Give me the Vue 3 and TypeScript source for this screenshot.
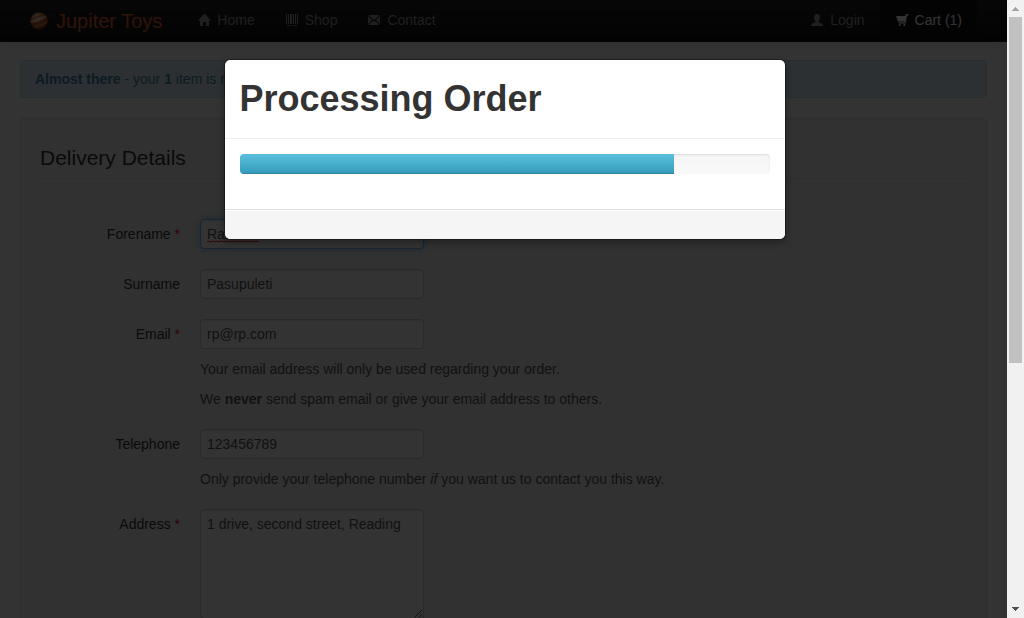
<script setup lang="ts">
import { ref } from 'vue'

const progress = ref(82)
const itemCount = ref(1)

const order = ref({
  forename: 'Ramesh',
  surname: 'Pasupuleti',
  email: 'rp@rp.com',
  telephone: '123456789',
  address: '1 drive, second street, Reading',
})
</script>

<template>
  <div class="window">
    <div class="viewport">
      <nav class="navbar">
        <a class="brand" href="#/home">
          <svg class="logo" width="34" height="24" viewBox="0 0 34 24" aria-hidden="true">
            <defs>
              <radialGradient id="planet" cx="0.4" cy="0.3" r="0.75">
                <stop offset="0" stop-color="#ffe6c4" />
                <stop offset="0.5" stop-color="#d8783c" />
                <stop offset="1" stop-color="#7a2508" />
              </radialGradient>
              <clipPath id="disc"><circle cx="18" cy="12" r="8.5" /></clipPath>
            </defs>
            <path d="M1 20 Q16 12 33 5" fill="none" stroke="#3a3a3a" stroke-width="1" />
            <circle cx="18" cy="12" r="8.5" fill="url(#planet)" />
            <g clip-path="url(#disc)" fill="none">
              <path d="M8 10 Q18 9 26 2" stroke="#c4683a" stroke-width="1.2" />
              <path d="M8 13 Q19 12 28 5" stroke="#ffe8cc" stroke-width="1.4" />
              <path d="M8 16 Q19 15 28 8" stroke="#b04a1c" stroke-width="1.6" />
              <path d="M9 19 Q20 18 28 12" stroke="#dc8450" stroke-width="1.2" />
              <path d="M12 21 Q22 20 28 15" stroke="#983a14" stroke-width="1.4" />
            </g>
          </svg>
          <span>Jupiter Toys</span>
        </a>
        <ul class="nav">
          <li>
            <a href="#/home">
              <svg width="14" height="14" viewBox="0 0 14 14" aria-hidden="true">
                <path d="M7.5 0.5 L14 7.5 H12 V13 H9 V9 H6 V13 H3 V7.5 H1 Z" />
              </svg>
              Home
            </a>
          </li>
          <li>
            <a href="#/shop">
              <svg width="14" height="14" viewBox="0 0 14 14" aria-hidden="true">
                <path d="M1 1h1v10H1zM3 1h1v10H3zM5 1h2v10H5zM8 1h1v10H8zM10 1h1v10h-1zM12 1h1v10h-1zM2 12h3v1H2zM6 12h1v1H6zM8 12h1v1H8zM10 12h2v1h-2z" />
              </svg>
              Shop
            </a>
          </li>
          <li>
            <a href="#/contact">
              <svg width="14" height="14" viewBox="0 0 14 14" aria-hidden="true">
                <path d="M1.500 2H12.500L7 7.200ZM1 3L5 7L1 11ZM13 3L9 7L13 11ZM5.700 7.700L7 9L8.300 7.700L12.500 12H1.500Z" />
              </svg>
              Contact
            </a>
          </li>
        </ul>
        <ul class="nav nav-right">
          <li>
            <a href="#/login">
              <svg width="14" height="14" viewBox="0 0 14 14" aria-hidden="true">
                <path d="M7 1C9 1 10 2.500 10 4.500C10 6.500 9 7.300 8.500 8V9L12 10.500Q13 11 13 13H1Q1 11 2 10.500L5.500 9V8C5 7.300 4 6.500 4 4.500C4 2.500 5 1 7 1Z" />
              </svg>
              Login
            </a>
          </li>
          <li>
            <a class="active" href="#/cart">
              <svg width="14" height="14" viewBox="0 0 14 14" aria-hidden="true">
                <path d="M10.800 1H13.500V2.400H12L10.600 10.400H3.500V9.200H9.300L9.500 8.500H3L1 3H10.400ZM4 11H5.500V13H4ZM8.500 11H10V13H8.500Z" />
              </svg>
              Cart ({{ itemCount }})
            </a>
          </li>
        </ul>
      </nav>

      <main class="content">
        <div class="alert">
          <strong>Almost there</strong> - your <strong>{{ itemCount }}</strong> item is r
        </div>

        <form class="well" @submit.prevent>
          <fieldset>
            <legend>Delivery Details</legend>

            <div class="group">
              <label for="forename">Forename <span class="req">*</span></label>
              <div class="controls">
                <div class="spelling">
                  <input id="forename" v-model="order.forename" class="focused" type="text" />
                  <svg class="squiggle" width="53" height="3" viewBox="0 0 53 3" aria-hidden="true">
                    <path
                      d="M0 2L2 1L4 2L6 1L8 2L10 1L12 2L14 1L16 2L18 1L20 2L22 1L24 2L26 1L28 2L30 1L32 2L34 1L36 2L38 1L40 2L42 1L44 2L46 1L48 2L50 1L52 2"
                    />
                  </svg>
                </div>
              </div>
            </div>

            <div class="group">
              <label for="surname">Surname</label>
              <div class="controls">
                <input id="surname" v-model="order.surname" type="text" />
              </div>
            </div>

            <div class="group">
              <label for="email">Email <span class="req">*</span></label>
              <div class="controls">
                <input id="email" v-model="order.email" type="email" />
                <p class="help">Your email address will only be used regarding your order.</p>
                <p class="help">We <strong>never</strong> send spam email or give your email address to others.</p>
              </div>
            </div>

            <div class="group">
              <label for="telephone">Telephone</label>
              <div class="controls">
                <input id="telephone" v-model="order.telephone" type="tel" />
                <p class="help">Only provide your telephone number <em>if</em> you want us to contact you this way.</p>
              </div>
            </div>

            <div class="group">
              <label for="address">Address <span class="req">*</span></label>
              <div class="controls">
                <textarea id="address" v-model="order.address" rows="5"></textarea>
              </div>
            </div>
          </fieldset>
        </form>
      </main>

      <div class="backdrop"></div>

      <section class="modal" role="dialog" aria-modal="true" aria-labelledby="modal-title">
        <header class="modal-header">
          <h1 id="modal-title">Processing Order</h1>
        </header>
        <div class="modal-body">
          <div
            class="progress"
            role="progressbar"
            aria-labelledby="modal-title"
            aria-valuemin="0"
            aria-valuemax="100"
            :aria-valuenow="progress"
          >
            <div class="bar" :style="{ width: progress + '%' }"></div>
          </div>
        </div>
        <footer class="modal-footer"></footer>
      </section>
    </div>

    <div class="scrollbar" aria-hidden="true">
      <svg width="17" height="17" viewBox="0 0 17 17" shape-rendering="crispEdges">
        <path fill="#a3a3a3" d="M8 7h1v1H8zM7 8h3v1H7zM6 9h5v1H6zM5 10h7v1H5z" />
      </svg>
      <div class="track"><div class="thumb"></div></div>
      <svg width="17" height="17" viewBox="0 0 17 17" shape-rendering="crispEdges">
        <path fill="#505050" d="M5 6h7v1H5zM6 7h5v1H6zM7 8h3v1H7zM8 9h1v1H8z" />
      </svg>
    </div>
  </div>
</template>

<style>
body {
  margin: 0;
  background: #fff;
}
</style>

<style scoped>
.window {
  display: flex;
  height: 100vh;
  overflow: hidden;
  color: #333;
  font: 14px/20px "Liberation Sans", Arial, sans-serif;
}

.viewport {
  position: relative;
  flex: 1;
  min-width: 0;
  overflow: hidden;
}

.navbar {
  position: relative;
  display: flex;
  box-sizing: border-box;
  padding-right: 30px;
  border-bottom: 1px solid #252525;
  background: linear-gradient(#222, #111);
  box-shadow: 0 1px 10px rgba(0, 0, 0, 0.1);
}

.brand {
  display: flex;
  align-items: center;
  gap: 1px;
  padding: 0 20px 0 21px;
  color: #e9602f;
  font-size: 20px;
  text-decoration: none;
}

.nav {
  display: flex;
  margin: 0;
  padding: 0;
  list-style: none;
}

.nav-right {
  margin-left: auto;
}

.nav a {
  display: flex;
  align-items: center;
  gap: 6px;
  padding: 10px 15px 11px;
  color: #999;
  text-decoration: none;
}

.nav svg {
  fill: currentColor;
}

.nav a.active {
  background: #111;
  box-shadow: inset 0 3px 8px rgba(0, 0, 0, 0.125);
  color: #fff;
}

.content {
  padding: 18px 20px;
}

.alert {
  margin-bottom: 20px;
  padding: 8px 35px 8px 14px;
  border: 1px solid #bce8f1;
  border-radius: 4px;
  background: #d9edf7;
  color: #3a87ad;
  text-shadow: 0 1px 0 rgba(255, 255, 255, 0.5);
}

.well {
  padding: 19px;
  border: 1px solid #e3e3e3;
  border-radius: 4px;
  background: #f5f5f5;
  box-shadow: inset 0 1px 1px rgba(0, 0, 0, 0.05);
}

fieldset {
  min-width: 0;
  margin: 0;
  padding: 0;
  border: 0;
}

legend {
  width: 100%;
  margin-bottom: 40px;
  padding: 0;
  border-bottom: 1px solid #e5e5e5;
  font-size: 21px;
  line-height: 40px;
}

.group {
  display: flex;
  gap: 20px;
  margin-bottom: 20px;
}

.group label {
  flex: none;
  width: 140px;
  padding-top: 5px;
  text-align: right;
}

.req {
  color: #f00;
}

.controls {
  flex: 1;
  min-width: 0;
}

.spelling {
  position: relative;
  width: 224px;
}

.squiggle {
  position: absolute;
  top: 21px;
  left: 7px;
  fill: none;
  stroke: #f00;
  stroke-width: 1;
}

input,
textarea {
  display: block;
  box-sizing: border-box;
  width: 224px;
  margin: 0;
  padding: 4px 6px;
  border: 1px solid #ccc;
  border-radius: 4px;
  outline: 0;
  background: #fff;
  box-shadow: inset 0 1px 1px rgba(0, 0, 0, 0.075);
  color: #555;
  font: inherit;
}

input {
  height: 30px;
}

textarea {
  height: 110px;
  resize: vertical;
}

.focused {
  border-color: #75b9f0;
  box-shadow: inset 0 1px 1px rgba(0, 0, 0, 0.075), 0 0 8px rgba(82, 168, 236, 0.6);
}

.help {
  margin: 10px 0 0;
  color: #595959;
}

.backdrop {
  position: absolute;
  inset: 0;
  background: rgba(0, 0, 0, 0.8);
}

.modal {
  position: absolute;
  top: 59px;
  left: 50%;
  width: 560px;
  margin-left: -280px;
  border: 1px solid rgba(0, 0, 0, 0.3);
  border-radius: 6px;
  background: #fff;
  background-clip: padding-box;
  box-shadow: 0 3px 7px rgba(0, 0, 0, 0.3);
}

.modal-header {
  padding: 9px 15px;
  border-bottom: 1px solid #eee;
}

h1 {
  margin: 10px 0;
  font-size: 36px;
  line-height: 40px;
}

.modal-body {
  padding: 15px;
}

.progress {
  height: 20px;
  margin-bottom: 20px;
  overflow: hidden;
  border-radius: 4px;
  background: linear-gradient(#f5f5f5, #f9f9f9);
  box-shadow: inset 0 1px 2px rgba(0, 0, 0, 0.1);
}

.bar {
  height: 100%;
  background: linear-gradient(#5bc0de, #339bb9);
  box-shadow: inset 0 -1px 0 rgba(0, 0, 0, 0.15);
}

.modal-footer {
  padding: 14px 15px 15px;
  border-top: 1px solid #ddd;
  border-radius: 0 0 6px 6px;
  background: #f5f5f5;
  box-shadow: inset 0 1px 0 #fff;
}

.scrollbar {
  display: flex;
  flex: none;
  flex-direction: column;
  width: 17px;
  background: #f1f1f1;
}

.scrollbar svg {
  flex: none;
}

.track {
  flex: 1;
  padding: 0 2px;
}

.thumb {
  height: 59.2%;
  background: #c1c1c1;
}
</style>
